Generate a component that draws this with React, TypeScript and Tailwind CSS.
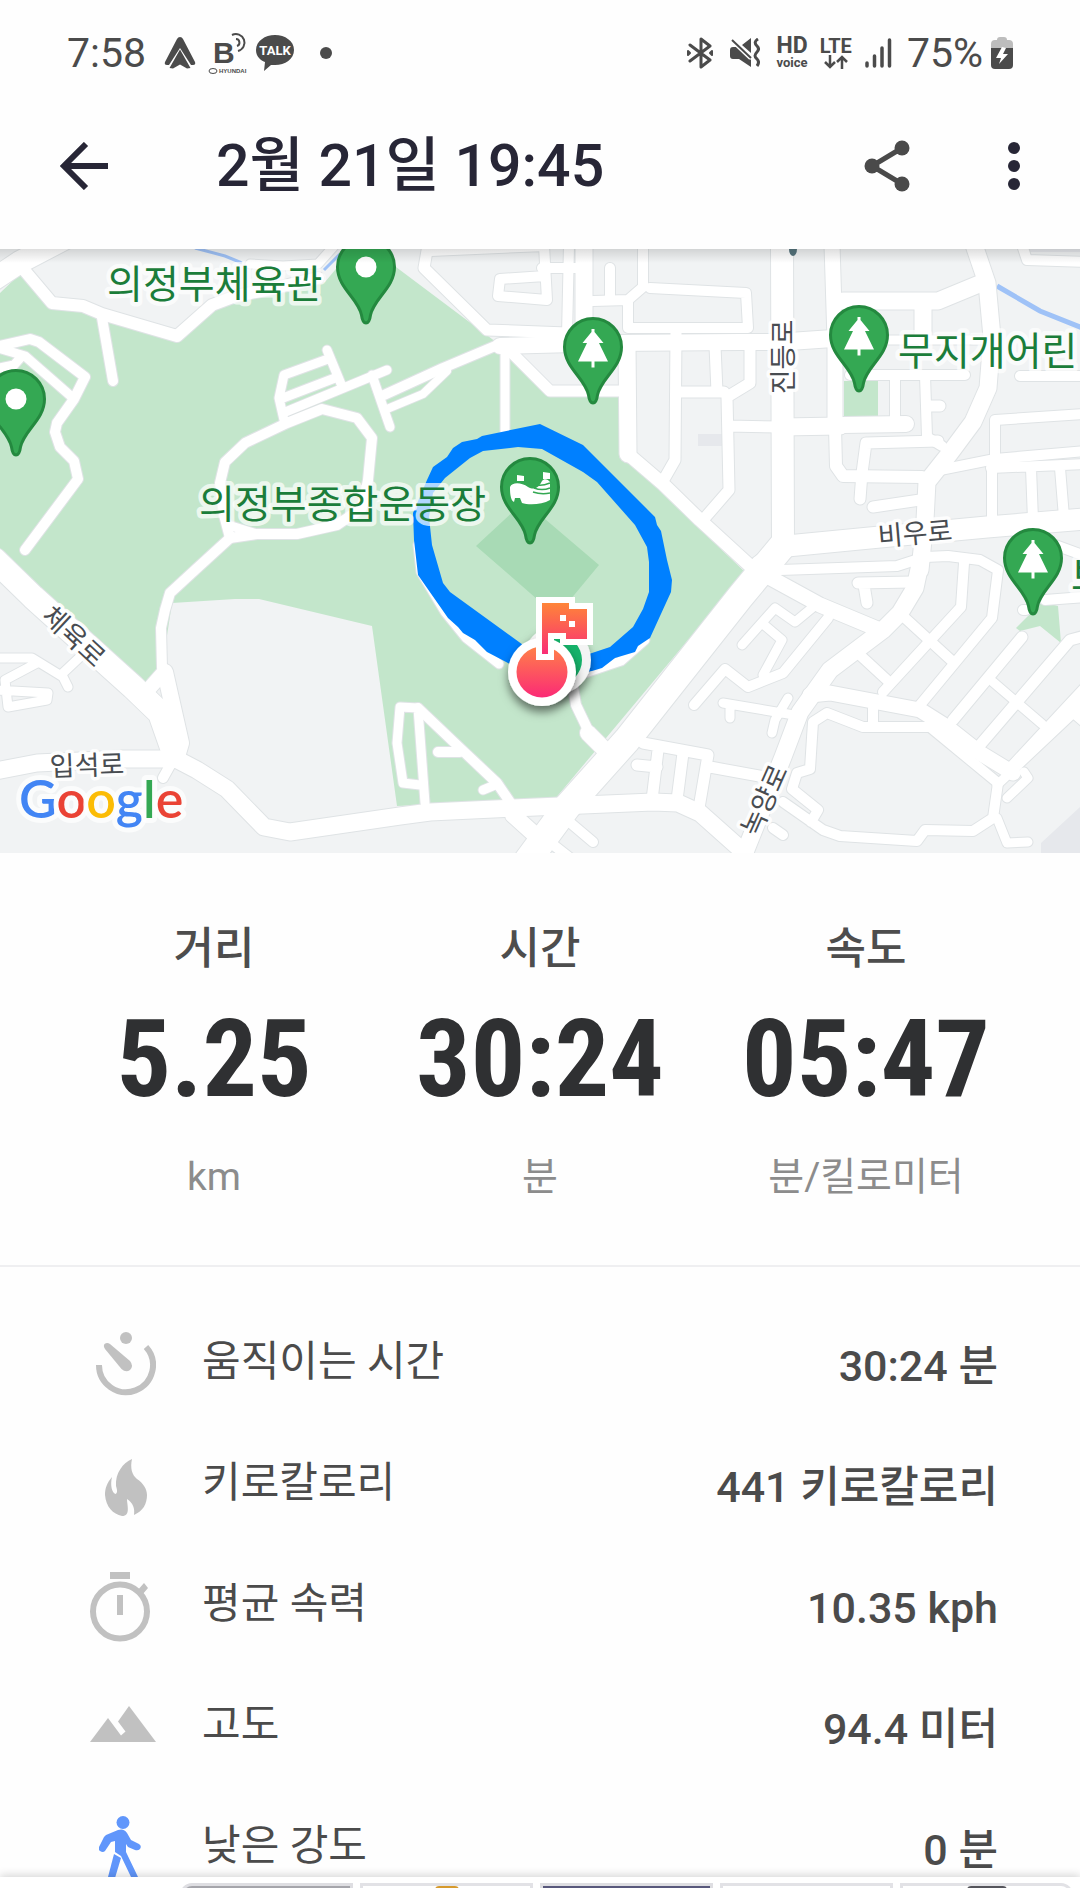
import type { ReactNode } from 'react';

interface Road {
  w: number;
  d: string;
}

interface Pin {
  x: number;
  y: number;
  kind: 'dot' | 'tree' | 'stadium';
}

interface Label {
  text: string;
  x: number;
  y: number;
  angle: number;
}

const roads: Road[] = [
  // north west
  { w: 22, d: 'M-10 282 L20 262 L66 238' },
  { w: 12, d: 'M22 262 L25 271 L52 303 L83 306 L102 314 L177 336 L212 305 L236 296 L275 288 L318 278' },
  { w: 9, d: 'M250 264 L283 266 L318 264 L335 245' },
  { w: 10, d: 'M102 318 L113 381' },
  { w: 10, d: 'M-5 347 L30 339 L39 342 L85 377 L74 399 L57 423 L55 432 L60 447 L74 461 L78 479 L25 550' },
  { w: 9, d: 'M-5 347 L25 356 L73 398 M22 356 L14 365 L-5 369' },
  { w: 10, d: 'M220 483 L225 462 L245 443 L287 423 L322 409 L357 418 L372 438 L368 480 L362 508 L337 525 L297 534 L257 534 L230 538 L224 515 Z' },
  { w: 10, d: 'M230 538 L195 570 L170 593 L165 610 L161 628 L162 668' },
  { w: 9, d: 'M228 525 L257 534' },
  { w: 9, d: 'M284 420 L279 398 L284 375 L328 359 M327 350 L341 384 M283 398 L335 378 M283 413 L387 370 M372 375 L390 427' },
  { w: 10, d: 'M384 395 L443 368 L500 344' },
  { w: 8, d: 'M387 409 L423 394 L447 371' },
  // south west
  { w: 24, d: 'M-5 560 L33 597 L133 687 L160 713 L174 753' },
  { w: 16, d: 'M165 672 L181 743 L176 760' },
  { w: 14, d: 'M148 690 L163 673' },
  { w: 10, d: 'M163 778 L173 760' },
  { w: 17, d: 'M-5 771 L37 763 L123 759 L176 759 L197 770 L227 789 L264 827 L290 832 L400 816 L430 812 L513 808 L653 802 L678 803 L700 813 L745 853' },
  { w: 9, d: 'M-5 658 L32 658 L63 677 L68 687 M63 673 L80 657 M37 663 L5 680 L8 707 L47 700 L48 693 L-5 690' },
  { w: 9, d: 'M425 803 L418 708 L400 707 L397 743 L403 783 L420 785' },
  { w: 10, d: 'M418 708 L460 748 L497 783 L512 805 M438 752 L460 752' },
  { w: 9, d: 'M483 790 L495 785' },
  { w: 10, d: 'M573 687 L576 705 L588 730 L608 752' },
  { w: 16, d: 'M588 733 L605 750' },
  { w: 9, d: 'M418 545 L421 572 L445 612 L466 638 L499 664 M585 673 L621 661 L645 640' },
  // north centre
  { w: 11, d: 'M428 245 L424 268 L487 330 L567 333' },
  { w: 10, d: 'M430 251 L545 246 M544 245 L547 300 L498 296 L500 279 L545 276 M542 268 L584 268' },
  { w: 10, d: 'M569 245 L567 335' },
  { w: 17, d: 'M584 245 L584 345' },
  { w: 16, d: 'M500 346 L613 343 L740 342 L782 342' },
  { w: 9, d: 'M505 345 L505 440' },
  { w: 11, d: 'M508 349 L550 391 L622 391' },
  { w: 10, d: 'M593 301 L628 300 L643 287 L643 245 M628 300 L628 328 L748 328 L746 293 L650 288' },
  { w: 10, d: 'M610 268 L610 300' },
  { w: 17, d: 'M627 345 L628 454' },
  { w: 13, d: 'M628 454 L663 484 L700 520 L760 575' },
  { w: 11, d: 'M676 333 L675 460 L663 481 M677 392 L724 392 M715 346 L717 392 M703 520 L729 490 L727 397 L750 383 L750 346 M728 426 L782 427' },
  // north east
  { w: 22, d: 'M782 245 L783 545' },
  { w: 17, d: 'M782 342 L840 338 M782 427 L840 426' },
  { w: 15, d: 'M832 245 L835 340 L835 427' },
  { w: 12, d: 'M835 427 L836 466 L843 476 L922 477' },
  { w: 17, d: 'M843 301 L938 301 L984 282 M923 301 L923 338' },
  { w: 9, d: 'M843 340 L990 340' },
  { w: 17, d: 'M973 242 L987 283 L992 337 L988 388 L973 422 L950 453 L927 482 L925 520 L920 570' },
  { w: 10, d: 'M850 375 L965 375 M895 375 L895 422 M925 375 L927 437 L942 446' },
  { w: 16, d: 'M843 425 L906 424' },
  { w: 11, d: 'M927 406 L940 406 M860 499 L862 473 L866 443 L938 441 M873 507 L920 500' },
  { w: 10, d: 'M1020 376 L1090 376 M1022 245 L1027 260 L1090 262' },
  { w: 10, d: 'M940 470 L995 459 L1085 451 M995 455 L995 420 L1085 414' },
  { w: 10, d: 'M991 468 L1085 464 M992 467 L992 520 M1031 468 L1033 520 M1060 468 L1064 517' },
  { w: 21, d: 'M760 566 L787 546 L880 537 L987 527 L1085 519' },
  // south east
  { w: 27, d: 'M783 545 L740 597 L627 740 L567 807 L528 860' },
  { w: 15, d: 'M767 576 L820 605 L880 630' },
  { w: 10, d: 'M780 570 L897 566 L925 557 L948 556 L980 560 L998 570 L992 618 L920 705 M964 563 L961 607 L883 692' },
  { w: 17, d: 'M922 555 L915 588 L900 613 L883 630 L830 670 L800 712 L783 757 L743 857' },
  { w: 11, d: 'M858 583 L912 582 M864 585 L867 603' },
  { w: 10, d: 'M905 618 L952 661 M861 656 L887 680' },
  { w: 10, d: 'M828 618 L783 673 L748 687 L725 669 L694 705' },
  { w: 9, d: 'M742 645 L775 608 L795 622 L812 608 M763 624 L782 640 L763 675' },
  { w: 9, d: 'M723 703 L800 716 M730 705 L730 718 M788 698 L775 720 L772 733' },
  { w: 15, d: 'M810 695 L830 693 L920 710 L947 727 L980 753 L1013 773' },
  { w: 10, d: 'M873 708 L873 725 M797 773 L810 769 L813 722 L827 713 L863 727 L930 727 L998 783 L993 818 L973 831 L925 830 L917 841 L840 836 L823 830 L783 802 M797 773 L792 789 L818 810 L811 822' },
  { w: 11, d: 'M710 767 L765 777 M637 765 L657 767 M643 743 L708 755 L699 808 M658 750 L652 800 M683 753 L677 800' },
  { w: 10, d: 'M773 828 L783 835 M567 820 L593 842 M547 840 L570 858' },
  { w: 16, d: 'M513 815 L533 833' },
  { w: 11, d: 'M1022 637 L953 720 M1085 636 L1070 640 L980 745 M1088 685 L1007 772' },
  { w: 9, d: 'M993 682 L1042 724 M1082 705 L997 785 M1024 772 L1028 778 L1007 798 M997 818 L1007 843 L1028 842 M1072 712 L1088 726' },
  { w: 10, d: 'M1045 600 L1085 597 M1023 610 L1026 610 M1055 545 L1085 556' },
];

const pins: Pin[] = [
  { x: 366, y: 267, kind: 'dot' },
  { x: 16, y: 399, kind: 'dot' },
  { x: 593, y: 347, kind: 'tree' },
  { x: 859, y: 335, kind: 'tree' },
  { x: 1033, y: 558, kind: 'tree' },
  { x: 530, y: 487, kind: 'stadium' },
];

const placeLabels: Label[] = [
  { text: '의정부체육관', x: 107, y: 298, angle: 0 },
  { text: '의정부종합운동장', x: 199, y: 518, angle: 0 },
  { text: '무지개어린', x: 898, y: 365, angle: 0 },
  { text: '보', x: 1071, y: 590, angle: 0 },
];

const roadLabels: Label[] = [
  { text: '진등로', x: 783, y: 357, angle: -90 },
  { text: '비우로', x: 915, y: 533, angle: -5 },
  { text: '체육로', x: 74, y: 636, angle: 43 },
  { text: '입석로', x: 87, y: 765, angle: -2 },
  { text: '녹양로', x: 764, y: 800, angle: -66 },
];

function MapPin({ x, y, kind }: Pin) {
  return (
    <g transform={`translate(${x} ${y})`}>
      <path
        d="M0 56 C-3 56 -4 52 -4.500 48 C-8 31 -28.500 21 -28.500 0 A28.500 28.500 0 0 1 28.500 0 C28.500 21 8 31 4.500 48 C4 52 3 56 0 56Z"
        fill="#34a853"
        stroke="#24893f"
        strokeWidth="3"
      />
      {kind === 'dot' && <circle r="10.500" fill="#fff" />}
      {kind === 'tree' && (
        <path
          d="M-1.500 -18 H1.500 V-15 L10.500 -4 H6 L15 14.500 H1.500 V20.500 H-1.500 V14.500 H-15 L-6 -4 H-10.500 L-1.500 -15Z"
          fill="#fff"
        />
      )}
      {kind === 'stadium' && (
        <g fill="#fff">
          <path d="M-13 -12 l7 1 v5 h-7z M13 -15 l7 1 v6 h-7z" />
          <path d="M-20 0 C-18 -5 -9 -5 -2 0 C5 4 9 0 12 -6 C14 -9 18 -8 20 -5 V13 C12 18 -2 18 -8 16 L-10 11 H-15 L-16 15 C-20 13 -20 4 -20 0Z" />
          <path d="M7 -2 C11 -1 15 -2 20 -4 M4 1 C9 3 15 3 20 1 M3 5 C9 7 15 7 20 6" stroke="#34a853" strokeWidth="1.500" fill="none" />
        </g>
      )}
    </g>
  );
}

function RouteMap() {
  return (
    <svg viewBox="0 249 1080 604" className="block w-full" role="img">
      <defs>
        <linearGradient id="finish" gradientUnits="userSpaceOnUse" x1="0" y1="600" x2="0" y2="656">
          <stop offset="0" stopColor="#ff8a35" />
          <stop offset="1" stopColor="#f92a78" />
        </linearGradient>
        <linearGradient id="finishDot" x1="0" y1="0" x2="0" y2="1">
          <stop offset="0" stopColor="#ff8148" />
          <stop offset="1" stopColor="#fb2a76" />
        </linearGradient>
        <linearGradient id="topShade" x1="0" y1="0" x2="0" y2="1">
          <stop offset="0" stopColor="#000" stopOpacity="0.13" />
          <stop offset="1" stopColor="#000" stopOpacity="0" />
        </linearGradient>
        <filter id="markerShadow" x="-50%" y="-50%" width="200%" height="200%">
          <feDropShadow dx="0" dy="6" stdDeviation="5" floodColor="#000" floodOpacity="0.5" />
        </filter>
      </defs>

      <rect y="249" width="1080" height="604" fill="#f1f3f4" />
      <g fill="#c3e6cb">
        <path d="M0 293 L22 272 L50 305 L80 308 L105 320 L178 340 L210 308 L245 292 L325 282 L345 258 L385 260 L396 267 L500 345 L545 393 L620 395 L622 455 L745 572 L555 799 L397 806 L372 626 L259 599 L235 599 L172 603 L162 668 L145 686 L0 555Z" />
        <path d="M844 381 h34 v35 h-34z M1016 628 L1042 602 L1058 606 L1061 643 L1040 626 L1020 631Z" />
      </g>
      <path d="M530 496 L476 546 L538 600 L570 600 L599 565 L545 519Z" fill="#a8dab5" />
      <path d="M698 434 h25 v12 h-25z M1080 807 L1041 843 V853 H1080Z M1026 249 h54 v3 h-54z" fill="#e6e8ec" />
      <path d="M195 248 L225 256 L242 263 M324 270 L340 254" stroke="#9fc2f7" strokeWidth="3" fill="none" />
      <path d="M997 286 L1040 311 L1085 329" stroke="#9fc2f7" strokeWidth="5" fill="none" />

      <g fill="none" strokeLinecap="round" strokeLinejoin="round">
        {roads.map((road) => (
          <path key={road.d} d={road.d} stroke="#dfe3e5" strokeWidth={road.w + 2} />
        ))}
        {roads.map((road) => (
          <path key={road.d} d={road.d} stroke="#fff" strokeWidth={road.w} />
        ))}
      </g>
      <ellipse cx="793" cy="249" rx="4" ry="7" fill="#55747d" />

      <path
        d="M540 424 L583 445 L655 517 L657 525 L661 531 L667 560 L672 580 L671 592 L650 638 L638 646 L635 652 L615 658 L602 668 L592 671 L570 675 L570 660 L592 653 L610 647 L633 627 L643 609 L649 592 L649 562 L647 547 L635 525 L597 482 L583 472 L542 449 L518 447 L483 451 L470 458 L445 478 L433 493 L429 517 L432 545 L443 583 L450 592 L530 650 L525 671 L508 663 L487 652 L475 640 L463 633 L458 627 L448 618 L418 575 L414 540 L413 513 L427 480 L433 467 L447 457 L453 448 L462 442 L477 439 L482 436Z"
        fill="#0080ff"
      />

      <g
        fill="#1b7d3a"
        stroke="#fff"
        strokeOpacity="0.7"
        strokeWidth="9"
        strokeLinejoin="round"
        paintOrder="stroke"
        className="font-['Noto_Sans_CJK_KR',sans-serif] text-[39px] font-normal"
      >
        {placeLabels.map((label) => (
          <text key={label.text} x={label.x} y={label.y}>
            {label.text}
          </text>
        ))}
      </g>
      <g
        fill="#484c51"
        stroke="#fff"
        strokeOpacity="0.9"
        strokeWidth="7"
        strokeLinejoin="round"
        paintOrder="stroke"
        textAnchor="middle"
        className="font-['Noto_Sans_CJK_KR',sans-serif] text-[27px] font-normal"
      >
        {roadLabels.map((label) => (
          <text key={label.text} transform={`translate(${label.x} ${label.y}) rotate(${label.angle})`} y="10">
            {label.text}
          </text>
        ))}
      </g>

      {pins.map((pin) => (
        <MapPin key={`${pin.x}-${pin.y}`} {...pin} />
      ))}

      <g filter="url(#markerShadow)">
        <circle cx="557" cy="660" r="34" fill="#f4f4f4" />
        <circle cx="557" cy="660" r="25" fill="#17b26a" />
      </g>
      <g filter="url(#markerShadow)">
        <circle cx="542" cy="672" r="34" fill="#fff" />
      </g>
      <circle cx="542" cy="672" r="25.500" fill="url(#finishDot)" />
      <path
        d="M542 603 H569 V609 H587 V639 H566 V633 H548 V654 H542Z"
        fill="url(#finish)"
        stroke="#fff"
        strokeWidth="12"
        paintOrder="stroke"
      />
      <path d="M560 615 h6 v6 h-6z M569 621 h6 v6 h-6z" fill="#fff" />

      <text
        x="19"
        y="818"
        stroke="#fff"
        strokeOpacity="0.7"
        strokeWidth="10"
        strokeLinejoin="round"
        paintOrder="stroke"
        className="font-['Lato',sans-serif] text-[52px] font-semibold"
      >
        <tspan fill="#4285f4">G</tspan>
        <tspan fill="#ea4335">o</tspan>
        <tspan fill="#fbbc05">o</tspan>
        <tspan fill="#4285f4">g</tspan>
        <tspan fill="#34a853">l</tspan>
        <tspan fill="#ea4335">e</tspan>
      </text>
      <rect y="249" width="1080" height="14" fill="url(#topShade)" />
    </svg>
  );
}

function StatusBar() {
  return (
    <div className="flex h-[100px] items-center justify-between px-[67px] pt-[6px] text-[#4b4b4b]">
      <div className="flex items-center">
        <span className="text-[41px] leading-none">7:58</span>
        <svg viewBox="0 0 32 32" className="ml-[18px] size-8" fill="currentColor">
          <path d="M16 0 Q18 0 19 2 L31 25 Q32 28 29 28 L27 28 L16 11 L5 28 L3 28 Q0 28 1 25 L13 2 Q14 0 16 0Z" />
          <path d="M16 12.500 L26.500 31 L23 31.500 L16 27.500 L9 31.500 L5.500 31Z" />
        </svg>
        <svg viewBox="0 0 40 44" className="ml-3 h-11 w-10" fill="currentColor">
          <text x="5" y="32" className="font-['Liberation_Sans',sans-serif] text-[30px] font-bold">B</text>
          <path d="M24 4 A8.600 8.600 0 1 1 30 20" fill="none" stroke="currentColor" strokeWidth="2" />
          <path d="M28 8 A3.600 3.600 0 0 1 29 15" fill="none" stroke="currentColor" strokeWidth="2" />
          <ellipse cx="5" cy="40" rx="4" ry="2.500" fill="none" stroke="currentColor" />
          <text x="11" y="42" className="font-['Liberation_Sans',sans-serif] text-[6px] font-bold">HYUNDAI</text>
        </svg>
        <svg viewBox="0 0 38 36" className="ml-2 h-9 w-[38px]" fill="currentColor">
          <path d="M19 0 C29 0 38 6 38 15 C38 24 29 30 19 30 L15 30 L8 36 L9 27 C4 25 0 21 0 15 C0 6 9 0 19 0Z" />
          <text x="19" y="20" fill="#fff" textAnchor="middle" className="font-['Roboto',sans-serif] text-[13px] font-bold">TALK</text>
        </svg>
        <span className="ml-[26px] size-3 rounded-full bg-current" />
      </div>
      <div className="flex items-center">
        <svg viewBox="0 0 28 32" className="h-8 w-7" fill="none" stroke="currentColor" strokeWidth="3" strokeLinejoin="round" strokeLinecap="round">
          <path d="M4 8 L24 23 L15 30 V2 L24 9 L4 24" />
          <path d="M2 14 L4 16 L2 18Z M26 14 L24 16 L26 18Z" strokeWidth="2" fill="currentColor" />
        </svg>
        <svg viewBox="0 0 30 30" className="ml-4 size-[30px]" fill="currentColor">
          <path d="M0 12 Q0 9 3 9 H7 L21 22 V29 L9 21 H3 Q0 21 0 18Z M12 7 L21 0 V15Z" />
          <path d="M2 2 L21 20" stroke="#fff" strokeWidth="5" />
          <path d="M2 2 L21 20" stroke="currentColor" strokeWidth="2" />
          <path d="M28 1 q-5 3 -1 7 q3 3 0 6 q-4 4 0 7 q3 3 0 7" fill="none" stroke="currentColor" strokeWidth="3" />
        </svg>
        <span className="ml-4 flex flex-col items-center font-bold">
          <span className="text-[23px] leading-[19px]">HD</span>
          <span className="text-[13px] leading-[15px]">voice</span>
        </span>
        <span className="ml-3 flex flex-col items-center font-bold">
          <span className="text-[20px] leading-[18px]">LTE</span>
          <svg viewBox="0 0 24 14" className="h-[14px] w-6" fill="none" stroke="currentColor" strokeWidth="2.500">
            <path d="M6 0 V12 M1 7 L6 12 L11 7 M18 14 V2 M13 7 L18 2 L23 7" />
          </svg>
        </span>
        <svg viewBox="0 0 28 30" className="ml-3 h-[30px] w-7" stroke="currentColor" strokeWidth="3.500" strokeLinecap="round">
          <path d="M3 25 V28 M10.500 18 V28 M18 10 V28 M25.500 2 V28" />
        </svg>
        <span className="ml-[15px] text-[41px] leading-none">75%</span>
        <svg viewBox="0 0 22 32" className="ml-2 h-8 w-[22px]">
          <path d="M6 3 Q6 0 9 0 H13 Q16 0 16 3 H18 Q22 3 22 7 V12 H0 V7 Q0 3 4 3Z" fill="#bdbdbd" />
          <path d="M0 11 H22 V28 Q22 32 18 32 H4 Q0 32 0 28Z" fill="#4b4b4b" />
          <path d="M11 10 L5 21 H10 L8 27 L17 17 H12 L15 11Z" fill="#fff" />
        </svg>
      </div>
    </div>
  );
}

function AppBar() {
  return (
    <header className="flex h-[149px] items-center px-[60px] pb-[18px] text-[#272636]">
      <button type="button" aria-label="뒤로">
        <svg viewBox="0 0 48 48" className="size-12" fill="none" stroke="currentColor" strokeWidth="6">
          <path d="M48 24 H5 M26 2 L4 24 L26 46" />
        </svg>
      </button>
      <h1 className="ml-[108px] flex-1 text-[59px] leading-none font-medium">2월 21일 19:45</h1>
      <button type="button" aria-label="공유" className="text-[#4a4a4a]">
        <svg viewBox="0 0 46 52" className="h-[52px] w-[46px]" fill="currentColor">
          <path d="M38 8 L8 26 L38 44" fill="none" stroke="currentColor" strokeWidth="5" />
          <circle cx="38" cy="8" r="7.500" />
          <circle cx="8" cy="26" r="7.500" />
          <circle cx="38" cy="44" r="7.500" />
        </svg>
      </button>
      <button type="button" aria-label="더보기" className="ml-[98px] flex flex-col gap-[6px]">
        <span className="size-3 rounded-full bg-current" />
        <span className="size-3 rounded-full bg-current" />
        <span className="size-3 rounded-full bg-current" />
      </button>
    </header>
  );
}

const stats = [
  { label: '거리', value: '5.25', unit: 'km' },
  { label: '시간', value: '30:24', unit: '분' },
  { label: '속도', value: '05:47', unit: '분/킬로미터' },
];

const details: { label: string; value: string; icon: ReactNode }[] = [
  {
    label: '움직이는 시간',
    value: '30:24 분',
    icon: (
      <svg viewBox="0 0 60 64" className="ml-[6px] h-16 w-[60px]" fill="#c1c1c1">
        <circle cx="30" cy="6" r="6" />
        <path d="M8.500 12 Q11 10 14 12 L34 29 Q38 34 34 38 Q30 41 25.500 37 L9 17 Q7 14 8.500 12Z" />
        <path d="M3 33 A27 27 0 1 0 50 15" fill="none" stroke="#c1c1c1" strokeWidth="6" />
      </svg>
    ),
  },
  {
    label: '키로칼로리',
    value: '441 키로칼로리',
    icon: (
      <svg viewBox="0 -6 42 64" className="ml-[15px] h-16 w-[42px]" fill="#c1c1c1">
        <path d="M27 0 C18 4 10 14 11 27 C12 30 13 34 10.500 35 C7 34 5 26 7 18 C2 24 0 29 0 36 C1 48 8 55 17 57 C26 57 22 46 22 40 C28 44 30 49 29 56 C38 52 42 45 42 36 C42 30 38 24 32 20 C27 16 25 9 27 0Z" />
      </svg>
    ),
  },
  {
    label: '평균 속력',
    value: '10.35 kph',
    icon: (
      <svg viewBox="0 -2 60 72" className="h-[72px] w-[60px]" fill="#c1c1c1">
        <path d="M20 0 H40 V7 H20Z M27 23 H33 V43 H27Z M47 19 L54 11 L58 16 L52 23Z" />
        <circle cx="30" cy="39.500" r="27" fill="none" stroke="#c1c1c1" strokeWidth="6" />
      </svg>
    ),
  },
  {
    label: '고도',
    value: '94.4 미터',
    icon: (
      <svg viewBox="0 0 66 42" className="h-[42px] w-[66px]" fill="#c1c1c1">
        <path d="M0 36 L18 12 L31 29.500 L35.500 25.500 L28 15.500 L39 0 L66 36Z" />
      </svg>
    ),
  },
  {
    label: '낮은 강도',
    value: '0 분',
    icon: (
      <svg viewBox="0 0 42 64" className="ml-[9px] h-16 w-[42px]" fill="#6096fb">
        <circle cx="24" cy="6.500" r="6.500" />
        <path d="M7 19 L19 14 Q25 12 28 17 L32 24 L40 28 Q43 30 41 33 Q39 35 36 34 L29 31 L27 28 V36 L39 61 L45 74 H39 L32 61 L22 40 L16 36 V25 L12 26 L6 35 Q4 37 1 35 Q-1 34 0 31 L5 21Z" />
        <path d="M15 38 L22 42 L16 62 L12 74 H6 L9 61Z" />
      </svg>
    ),
  },
];

export default function App() {
  return (
    <div className="flex h-screen flex-col overflow-hidden bg-[#fefefe] font-['Roboto','Noto_Sans_CJK_KR',sans-serif]">
      <StatusBar />
      <AppBar />

      <main className="min-h-0 flex-1 overflow-hidden">
        <RouteMap />

        <section className="grid grid-cols-3 border-b-2 border-[#efeff1] px-[51px] pt-[68px] pb-[60px] text-center">
          {stats.map((stat) => (
            <div key={stat.label} className="flex flex-col items-center whitespace-nowrap">
              <h2 className="text-[44px] leading-[56px] font-medium text-[#4d4d4d]">{stat.label}</h2>
              <p className="mt-3 font-['Roboto_Condensed','Liberation_Sans_Narrow','Roboto',sans-serif] text-[108px] leading-[140px] font-bold text-[#2f3032]">
                {stat.value}
              </p>
              <p className="mt-5 text-[39px] leading-[56px] text-[#8c8c8c]">{stat.unit}</p>
            </div>
          ))}
        </section>

        <ul className="pt-9 pr-[82px] pl-[90px] text-[#4b4b4b]">
          {details.map((item) => (
            <li key={item.label} className="flex h-[121px] items-center">
              <span className="w-[112px] shrink-0">{item.icon}</span>
              <span className="flex-1 pb-1 text-[42px] leading-[60px]">{item.label}</span>
              <span className="pt-1 text-[43px] leading-[60px] font-medium">{item.value}</span>
            </li>
          ))}
        </ul>
      </main>

      <footer className="z-10 grid h-[11px] shrink-0 grid-cols-5 gap-[7px] overflow-hidden bg-white pt-[6px] pr-[7px] pl-[180px] shadow-[0_-2px_8px_rgba(0,0,0,0.16)]">
        <div className="h-16 rounded-l-xl border-3 border-[#dedee2] bg-[#a5a5ab]" />
        <div className="flex h-16 justify-center border-3 border-[#e2e2e6] bg-white">
          <span className="h-8 w-6 rounded-t-sm bg-[#d69a2d]" />
        </div>
        <div className="h-16 border-3 border-[#dedee2] bg-[#58587c]" />
        <div className="h-16 border-3 border-[#e2e2e6] bg-white" />
        <div className="flex h-16 justify-center rounded-r-xl border-3 border-[#e2e2e6] bg-white">
          <span className="h-8 w-10 rounded-t-sm bg-[#55555c]" />
        </div>
      </footer>
    </div>
  );
}
